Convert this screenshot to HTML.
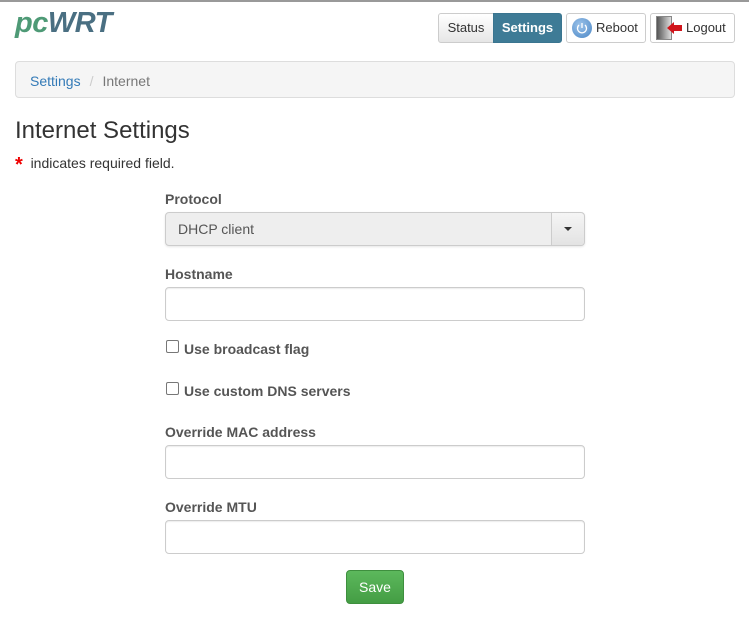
<!DOCTYPE html>
<html><head><meta charset="utf-8"><style>
*{box-sizing:border-box}
body{margin:0;width:749px;height:621px;background:#fff;font-family:"Liberation Sans",sans-serif;font-size:14px;color:#333;position:relative;overflow:hidden;border-top:2px solid #999}
.a{position:absolute}
.logo{left:15px;top:5px;font-size:29px;font-weight:bold;font-style:italic;letter-spacing:-0.5px}
.btn{position:absolute;top:11px;height:30px;border:1px solid #ccc;border-radius:3px;background:linear-gradient(#fff,#e6e6e6);font-size:13px;line-height:27px;color:#333}
.lbl{position:absolute;left:165px;font-weight:bold;color:#555;font-size:14px}
.inp{position:absolute;left:165px;width:420px;height:34px;border:1px solid #ccc;border-radius:4px;background:#fff;box-shadow:inset 0 1px 1px rgba(0,0,0,.075)}
.cb{position:absolute;left:166px;width:13px;height:13px;border:1px solid #777;border-radius:2px;background:#fff}
</style></head><body>
<div class="a logo"><span style="color:#4e9a76">pc</span><span style="color:#4a6f82">WRT</span></div>

<div class="btn" style="left:438px;width:56px;border-radius:3px 0 0 3px;text-align:center">Status</div>
<div class="btn" style="left:493px;width:69px;border-radius:0 3px 3px 0;background:#3e7b96;border-color:#3a7590;color:#fff;font-weight:bold;text-align:center">Settings</div>
<div class="btn" style="left:566px;width:80px;background:#fff">
 <span class="a" style="left:5px;top:4px;width:20px;height:20px;border-radius:50%;background:radial-gradient(circle at 40% 35%,#9cc3ea,#4a86c5);"><svg width="20" height="20" viewBox="0 0 20 20" style="position:absolute;left:0;top:0"><path d="M7 7a4.5 4.5 0 1 0 6 0" fill="none" stroke="#fff" stroke-width="1.3"/><path d="M10 5v5" stroke="#fff" stroke-width="1.3"/></svg></span>
 <span class="a" style="left:29px;top:0">Reboot</span></div>
<div class="btn" style="left:650px;width:85px;background:#fff">
 <span class="a" style="left:5px;top:2px;width:16px;height:24px;background:linear-gradient(90deg,#555,#ddd);border:1px solid #888"></span>
 <svg class="a" style="left:16px;top:7px" width="16" height="14" viewBox="0 0 16 14"><path d="M0 7L7 1V4H15V10H7V13Z" fill="#d0151b"/></svg>
 <span class="a" style="left:35px;top:0">Logout</span></div>

<div class="a" style="left:15px;top:59px;width:720px;height:37px;background:#f5f5f5;border:1px solid #ddd;border-radius:4px;padding:0 14px;line-height:38px;font-size:14px"><span style="color:#337ab7">Settings</span><span style="color:#ccc;padding:0 9px">/</span><span style="color:#777">Internet</span></div>

<div class="a" style="left:15px;top:115px;font-size:24px;color:#333">Internet Settings</div>
<div class="a" style="left:15px;top:149px;font-size:14px"><span style="color:#e00;font-size:20px;font-weight:bold;position:relative;top:3px">*</span>&nbsp; indicates required field.</div>

<div class="lbl" style="top:189px">Protocol</div>
<div class="inp" style="top:210px;background:#eee;box-shadow:0 1px 2px rgba(0,0,0,.1);border-color:#ccc"><span class="a" style="left:12px;top:8px;color:#555">DHCP client</span>
 <span class="a" style="right:0;top:0;width:33px;height:32px;border-left:1px solid #ccc;background:linear-gradient(#f5f5f5,#e3e3e3);border-radius:0 4px 4px 0"><span class="a" style="left:12px;top:14px;border-left:4px solid transparent;border-right:4px solid transparent;border-top:4px solid #333"></span></span></div>

<div class="lbl" style="top:264px">Hostname</div>
<div class="inp" style="top:285px"></div>

<div class="cb" style="top:338px"></div><div class="lbl" style="left:184px;top:339px">Use broadcast flag</div>
<div class="cb" style="top:380px"></div><div class="lbl" style="left:184px;top:381px">Use custom DNS servers</div>

<div class="lbl" style="top:422px">Override MAC address</div>
<div class="inp" style="top:443px"></div>
<div class="lbl" style="top:497px">Override MTU</div>
<div class="inp" style="top:518px"></div>

<div class="a" style="left:346px;top:568px;width:58px;height:34px;background:linear-gradient(#5cb85c,#449d44);border:1px solid #3e8f3e;border-radius:4px;color:#fff;text-align:center;line-height:32px;font-size:14px">Save</div>
</body></html>
